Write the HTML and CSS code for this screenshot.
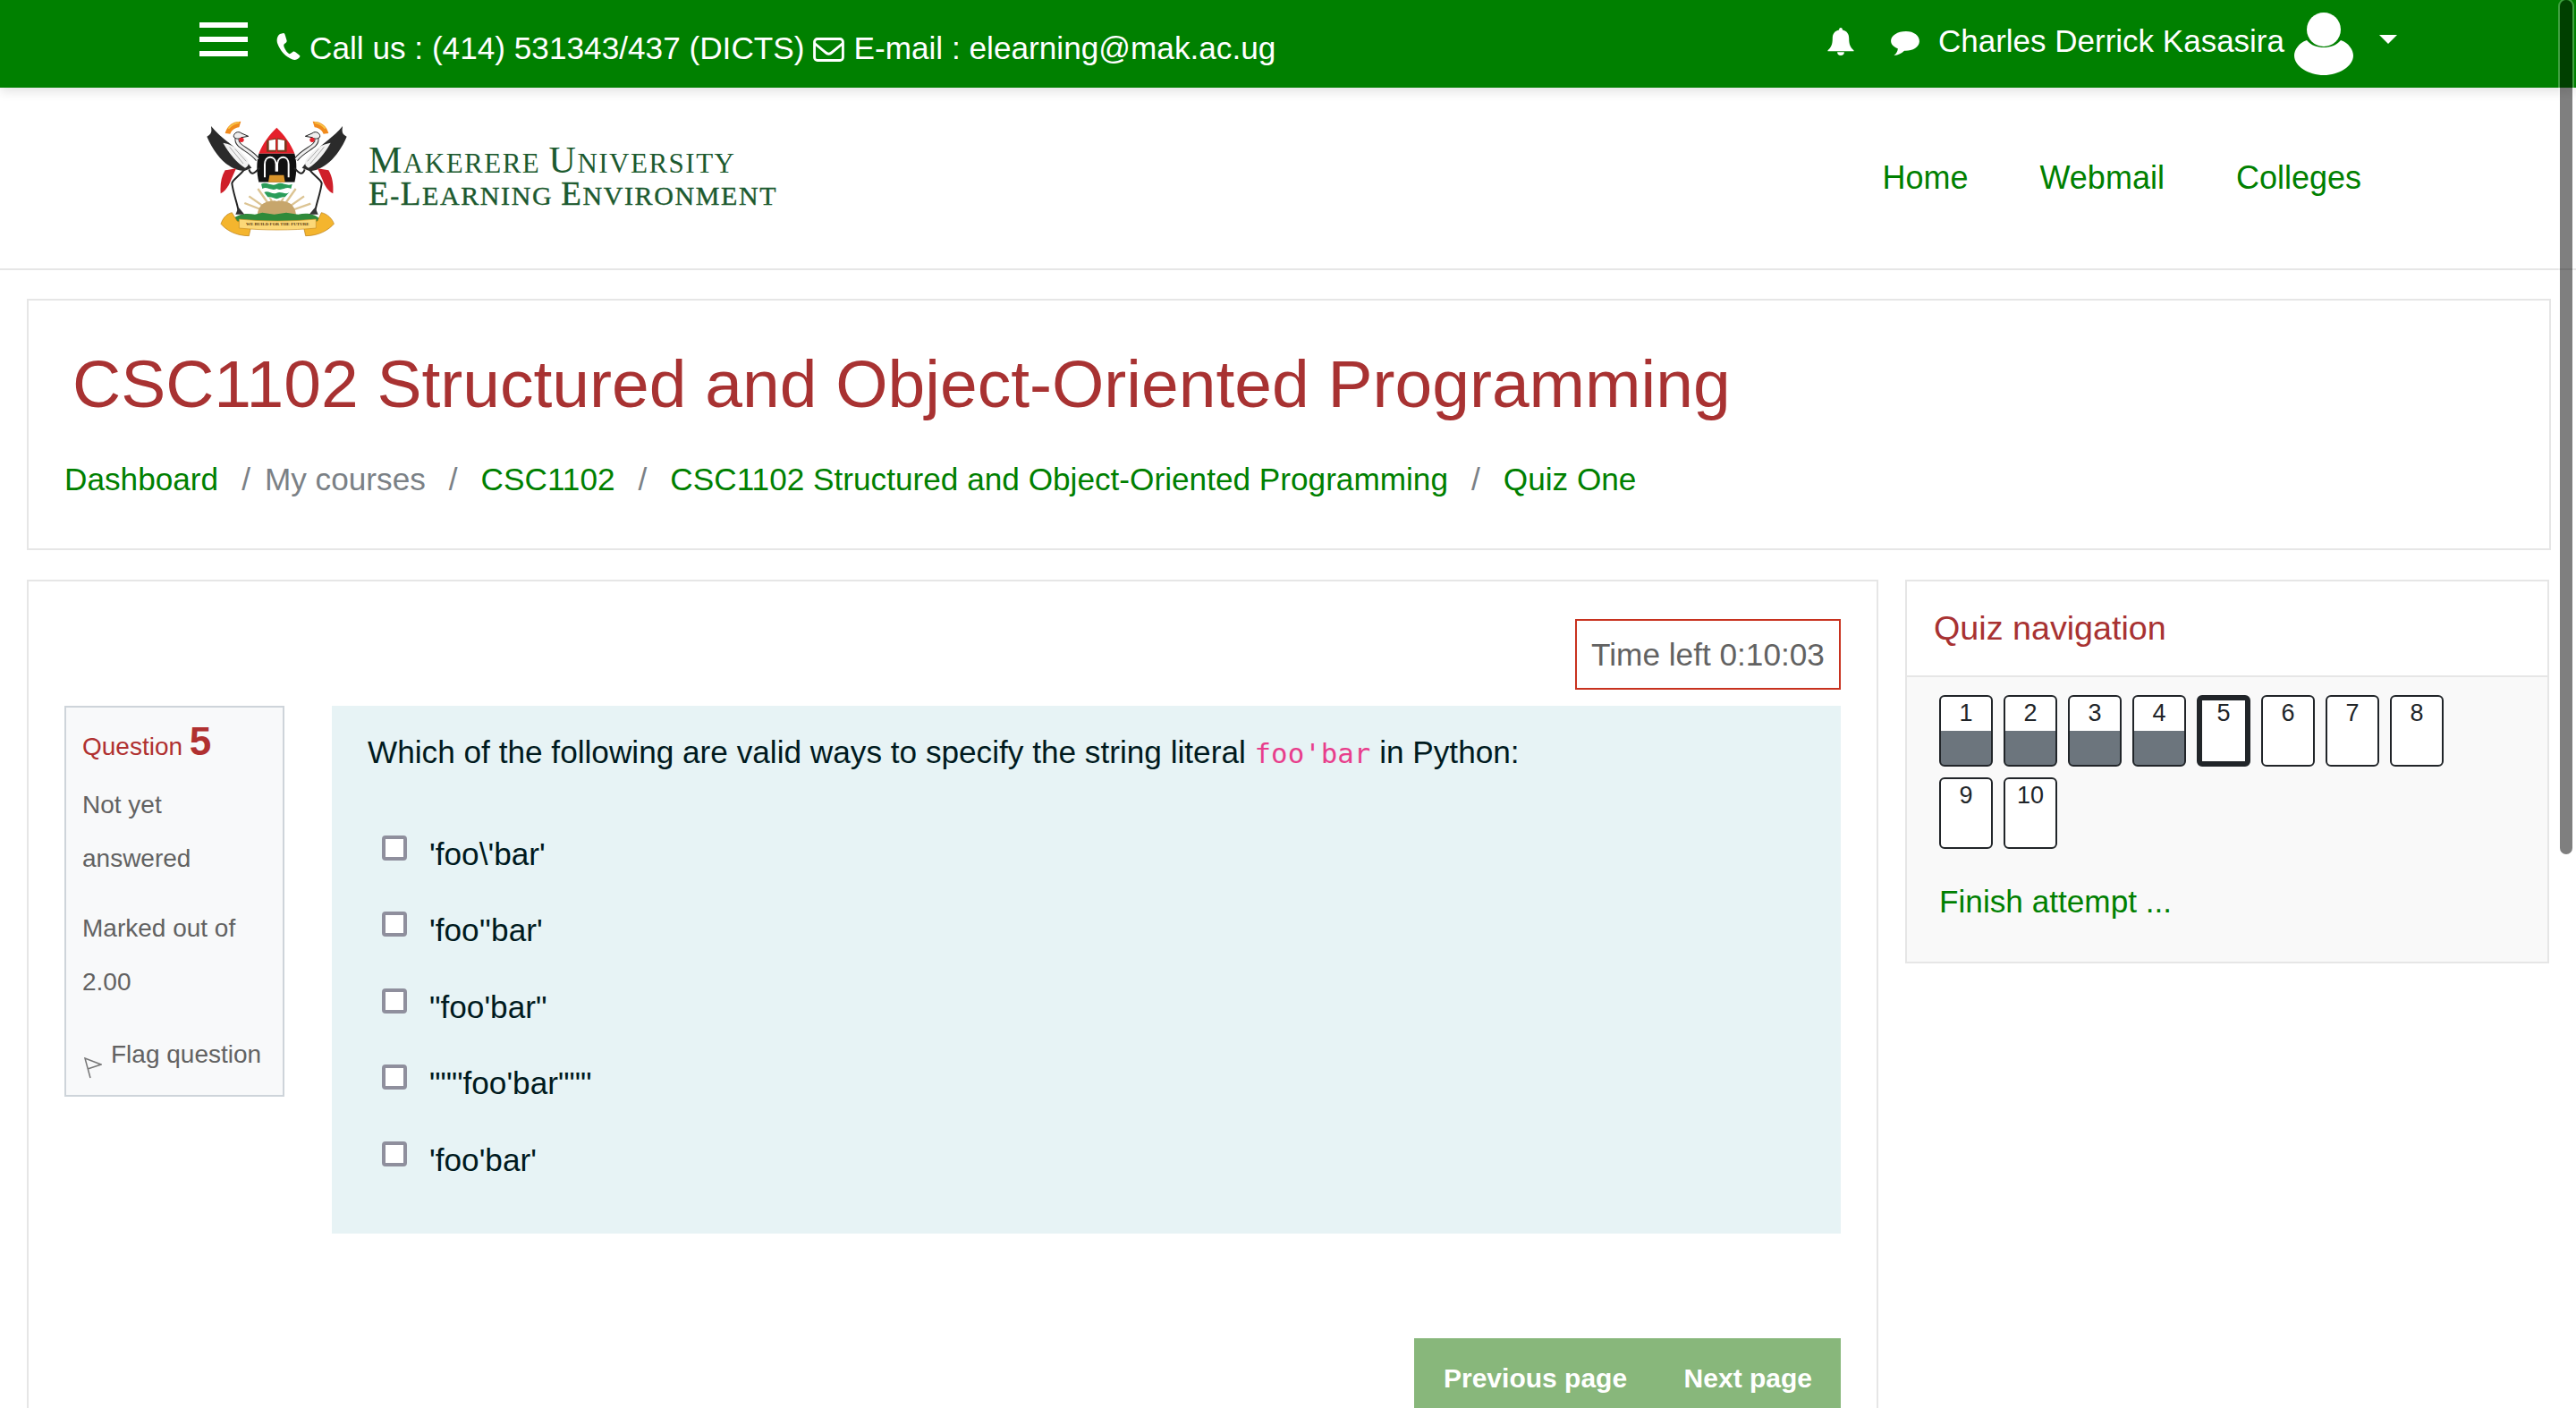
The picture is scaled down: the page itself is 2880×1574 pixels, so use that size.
FILE: index.html
```html
<!DOCTYPE html>
<html>
<head>
    <meta charset="utf-8">
    <title>Quiz One</title>
    <link rel="stylesheet" href="styles.css">
</head>
<body>

<header class="topbar">
    <div class="hamburger"><span></span><span></span><span></span></div>
    <svg class="ico-phone" viewBox="0 0 30 30"><path d="M7 1 L11 0 C12 0 12.500 1 13 3 L14.500 8 C15 10 14 10.500 12 12 C11 13 11 14 12 16.500 C13.500 20 15.500 22 17 23 C18 23.500 19 23 20 22 C21.500 20.500 22.500 20 24 21 L28.500 24.500 C30 25.500 29.500 26.500 28.500 27.500 C26.500 29.500 24 30.500 21 29.500 C14 27 7 20 4 11 C3 7 4 3 7 1 Z" fill="#fff"/></svg>
    <span class="contact">Call us : (414) 531343/437 (DICTS)</span>
    <svg class="ico-mail" viewBox="0 0 36 28"><rect x="1.500" y="1.500" width="33" height="25" rx="3.500" fill="none" stroke="#fff" stroke-width="3"/><path d="M2 7 L14 17 C16.500 19.500 19.500 19.500 22 17 L34 7" fill="none" stroke="#fff" stroke-width="3"/></svg>
    <span class="contact">E-mail : elearning@mak.ac.ug</span>

    <div class="topbar-right">
        <svg class="ico-bell" viewBox="0 0 30 32"><path d="M15 0 C16.500 0 17 1 17 2.500 C22 3.500 24.500 7 24.500 12 C24.500 19 26 22.500 30 26 L30 27 L0 27 L0 26 C4 22.500 5.500 19 5.500 12 C5.500 7 8 3.500 13 2.500 C13 1 13.500 0 15 0 Z M11 28 L19 28 C19 30.500 17.500 32 15 32 C12.500 32 11 30.500 11 28 Z" fill="#fff"/></svg>
        <svg class="ico-chat" viewBox="0 0 34 28"><path d="M18 0 C27 0 34 5 33.500 12 C33 19 25 23 16 22.500 C13 25.500 9 27.500 4 28 C7 25.500 8.500 23 8.500 20 C3 18 0.500 15 0.500 11 C0.500 5 8 0 18 0 Z" fill="#fff"/></svg>
        <span class="username">Charles Derrick Kasasira</span>
        <svg class="ico-user" viewBox="0 0 66 70"><ellipse cx="33" cy="19" rx="19" ry="19" fill="#fff"/><path d="M14 31 C19 37 26 39 33 39 C40 39 47 37 52 31 C61 34 66 42 66 48 C66 60 50 70 33 70 C16 70 0 60 0 48 C0 42 5 34 14 31 Z" fill="#fff"/></svg>
        <span class="caret"></span>
    </div>
</header>

<nav class="navbar">
    <svg class="crest" viewBox="0 0 600 480">
        <!-- sun rays -->
        <g stroke="#dcc493" stroke-width="7">
            <path d="M298 360 L190 318 M298 360 L205 295 M298 360 L235 270 M298 360 L262 260 M298 360 L334 260 M298 360 L362 270 M298 360 L390 295 M298 360 L412 320"/>
        </g>
        <path d="M233 360 C236 320 262 310 298 310 C334 310 360 320 363 360 Z" fill="#c7a66c"/>
        <path d="M140 382 C165 350 200 352 225 356 L250 350 L290 356 L330 350 L370 356 C400 350 430 352 452 382 Z" fill="#2f8a3a"/>
        <!-- shield -->
        <path d="M298 65 C272 90 250 120 238 152 L358 152 C346 120 324 90 298 65 Z" fill="#e5202a"/>
        <path d="M238 152 L358 152 C366 180 366 215 358 248 L238 248 C230 215 230 180 238 152 Z" fill="#111"/>
        <path d="M238 248 L358 248 C352 275 328 300 298 312 C268 300 244 275 238 248 Z" fill="#fff"/>
        <path d="M246 254 C265 244 280 264 298 254 C316 244 332 264 350 254 L346 270 C328 260 316 280 298 270 C280 280 265 260 250 270 Z M256 282 C270 274 284 292 298 284 C312 276 326 292 340 282 L326 298 C316 296 306 302 298 304 C288 300 278 296 268 298 Z" fill="#2a9d5a"/>
        <path d="M264 108 L296 100 L296 146 L264 146 Z M300 100 L332 108 L332 146 L300 146 Z" fill="#7b3a1e"/>
        <path d="M272 108 L294 104 L294 140 L272 140 Z M302 104 L324 108 L324 140 L302 140 Z" fill="#fff"/>
        <path d="M258 232 L258 188 C258 158 292 156 296 186 L296 212 M300 212 L300 186 C304 156 338 158 338 188 L338 232" fill="none" stroke="#fff" stroke-width="6"/>
        <path d="M274 224 L322 224 L326 248 L270 248 Z" fill="#d9952b"/>
        <!-- cranes -->
        <g id="crane">
            <path d="M125 84 C132 58 150 44 178 44 L172 64 C158 66 148 72 142 86 Z" fill="#f08a1d"/>
            <path d="M136 68 C146 56 158 50 172 48" stroke="#f7c948" stroke-width="5" fill="none"/>
            <!-- legs -->
            <path d="M190 205 C170 230 150 240 148 252 C152 285 165 315 170 345 M205 205 C212 225 222 222 240 200" fill="none" stroke="#222" stroke-width="6"/>
            <path d="M160 356 L170 332 L190 356 Z" fill="#333"/>
            <!-- wing -->
            <path d="M64 95 C85 85 78 70 78 60 C105 95 150 122 174 148 L214 200 L190 210 C145 210 95 168 64 95 Z" fill="#2b2b2b"/>
            <path d="M118 116 C145 120 172 134 198 168 C208 182 204 196 192 200 C165 184 138 152 118 116 Z" fill="#f2f2f2"/>
            <path d="M140 130 L186 186 M158 136 L196 178" stroke="#aaa" stroke-width="3"/>
            <path d="M125 208 L162 202 L145 240 C138 260 125 280 110 286 C108 255 112 230 125 208 Z" fill="#cf1f2a"/>
            <!-- neck and head -->
            <path d="M165 100 C160 130 205 135 234 172" fill="none" stroke="#333" stroke-width="15"/>
            <path d="M165 100 C160 130 205 135 234 172" fill="none" stroke="#eee" stroke-width="9"/>
            <path d="M180 84 L203 94 L180 98 C172 104 160 104 154 96 C152 84 168 74 180 84 Z" fill="#eee" stroke="#222" stroke-width="3"/>
            <circle cx="180" cy="106" r="8" fill="#e5202a"/>
        </g>
        <use href="#crane" transform="translate(597 0) scale(-1 1)"/>
        <!-- scroll -->
        <path d="M148 350 C128 354 116 372 111 388 C128 408 160 428 205 428 L212 396 L165 378 Z" fill="#f4b52e" stroke="#b67a12" stroke-width="2"/>
        <path d="M448 350 C468 354 486 372 490 388 C472 408 440 428 395 428 L388 396 L435 378 Z" fill="#f4b52e" stroke="#b67a12" stroke-width="2"/>
        <path d="M172 372 C250 380 350 380 430 372 L430 402 C350 410 250 410 172 402 Z" fill="#fcd877" stroke="#c88e22" stroke-width="2"/>
        <text class="crest-motto" x="301" y="392" text-anchor="middle">WE BUILD FOR THE FUTURE</text>
    </svg>
    <div class="brand">
        <div class="brand-top"><span>M</span>akerere <span>U</span>niversity</div>
        <div class="brand-bottom"><span>E</span>-<span>L</span>earning <span>E</span>nvironment</div>
    </div>
    <ul class="nav-links">
        <li>Home</li>
        <li>Webmail</li>
        <li>Colleges</li>
    </ul>
</nav>

<section class="page-head">
    <h1>CSC1102 Structured and Object-Oriented Programming</h1>
    <ol class="crumbs">
        <li><a>Dashboard</a></li>
        <li class="sep first">/</li>
        <li>My courses</li>
        <li class="sep">/</li>
        <li><a>CSC1102</a></li>
        <li class="sep">/</li>
        <li><a>CSC1102 Structured and Object-Oriented Programming</a></li>
        <li class="sep">/</li>
        <li><a>Quiz One</a></li>
    </ol>
</section>

<div class="columns">
    <main class="quiz-card">
        <div class="time-left">Time left 0:10:03</div>

        <div class="question-row">
            <aside class="q-info">
                <h3 class="q-no">Question <b>5</b></h3>
                <p class="q-state">Not yet answered</p>
                <p class="q-grade">Marked out of 2.00</p>
                <div class="q-flag">
                    <svg viewBox="0 0 20 24"><path d="M7 23 L1 1 L19 8 L4 13" fill="none" stroke="#777" stroke-width="1.500"/></svg>
                    <span>Flag question</span>
                </div>
            </aside>

            <div class="formulation">
                <p class="q-text">Which of the following are valid ways to specify the string literal <code>foo'bar</code> in Python:</p>
                <div class="answers">
                    <label class="answer"><span class="check"></span>'foo\'bar'</label>
                    <label class="answer"><span class="check"></span>'foo''bar'</label>
                    <label class="answer"><span class="check"></span>"foo'bar"</label>
                    <label class="answer"><span class="check"></span>"""foo'bar"""</label>
                    <label class="answer"><span class="check"></span>'foo'bar'</label>
                </div>
            </div>
        </div>

        <div class="page-btns">
            <span>Previous page</span>
            <span>Next page</span>
        </div>
    </main>

    <aside class="quiz-nav">
        <h4>Quiz navigation</h4>
        <div class="quiz-nav-body">
            <div class="q-buttons">
                <span class="q-btn answered">1</span>
                <span class="q-btn answered">2</span>
                <span class="q-btn answered">3</span>
                <span class="q-btn answered">4</span>
                <span class="q-btn current">5</span>
                <span class="q-btn">6</span>
                <span class="q-btn">7</span>
                <span class="q-btn">8</span>
                <span class="q-btn">9</span>
                <span class="q-btn">10</span>
            </div>
            <a class="finish">Finish attempt ...</a>
        </div>
    </aside>
</div>

<div class="scroll-thumb"></div>

</body>
</html>
```

FILE: styles.css
```css
html, body {
    margin: 0;
    height: 1574px;
    overflow: hidden;
    background: #fff;
    font-family: "Liberation Sans", Arial, sans-serif;
    color: #626262;
}

/* top green bar */
.topbar {
    height: 98px;
    background: #008000;
    color: #fff;
    display: flex;
    align-items: flex-start;
    padding-left: 223px;
    box-shadow: 0 4px 12px rgba(0, 0, 0, 0.12);
    position: relative;
}

.hamburger {
    width: 54px;
    margin-top: 25px;
    display: flex;
    flex-direction: column;
    gap: 10px;
}

.hamburger span {
    display: block;
    height: 6px;
    background: #fff;
}

.ico-phone {
    width: 30px;
    height: 30px;
    margin: 37px 10px 0 29px;
}

.contact {
    font-size: 35.200px;
    line-height: 42px;
    margin-top: 33px;
    white-space: nowrap;
}

.ico-mail {
    width: 35px;
    height: 27px;
    margin: 42px 10px 0 10px;
}

.topbar-right {
    margin-left: auto;
    display: flex;
    align-items: flex-start;
    padding-right: 200px;
}

.ico-bell {
    width: 30px;
    height: 31px;
    margin: 31px 40px 0 0;
}

.ico-chat {
    width: 34px;
    height: 27px;
    margin: 35px 20px 0 0;
}

.username {
    font-size: 35px;
    line-height: 42px;
    margin-top: 25px;
    white-space: nowrap;
}

.ico-user {
    width: 66px;
    height: 70px;
    margin: 14px 0 0 11px;
}

.caret {
    width: 0;
    height: 0;
    margin: 39px 0 0 29px;
    border-left: 10px solid transparent;
    border-right: 10px solid transparent;
    border-top: 10px solid #fff;
}

/* logo and links */
.navbar {
    height: 204px;
    box-sizing: border-box;
    border-bottom: 2px solid #e6e6e6;
    display: flex;
    align-items: center;
    padding-left: 210px;
}

.crest {
    width: 200px;
    height: 160px;
    margin-top: 4px;
}

.crest-motto {
    font-family: "Liberation Serif", serif;
    font-size: 15px;
    font-weight: bold;
    fill: #5a3a10;
}

.brand {
    margin: -2px 0 0 2px;
    font-family: "Liberation Serif", serif;
    text-transform: uppercase;
    color: #1c5a2f;
    white-space: nowrap;
}

.brand-top {
    font-size: 31px;
    line-height: 36px;
    letter-spacing: 1.500px;
}

.brand-top span {
    font-size: 42px;
}

.brand-bottom {
    font-size: 30px;
    line-height: 32px;
    letter-spacing: 1.600px;
    -webkit-text-stroke: 0.400px #1c5a2f;
}

.brand-bottom span {
    font-size: 37px;
}

.nav-links {
    list-style: none;
    margin: 0 240px 0 auto;
    padding: 0;
    display: flex;
    gap: 80px;
    font-size: 36px;
    color: #008000;
}

/* course title */
.page-head {
    margin: 32px 28px 0 30px;
    height: 281px;
    box-sizing: border-box;
    border: 2px solid #e6e6e6;
    padding: 43px 40px 0 40px;
}

.page-head h1 {
    margin: 0 0 0 9px;
    font-size: 75px;
    line-height: 100px;
    font-weight: normal;
    color: #a83232;
    white-space: nowrap;
}

.crumbs {
    list-style: none;
    margin: 35px 0 0 0;
    padding: 0;
    display: flex;
    font-size: 35.200px;
    line-height: 44px;
    color: #7b8186;
    white-space: nowrap;
}

.crumbs a {
    color: #008000;
}

.crumbs .sep {
    padding: 0 26px;
}

.crumbs .sep.first {
    padding-right: 16px;
}

/* the two columns below */
.columns {
    display: grid;
    grid-template-columns: 2070px 720px;
    gap: 30px;
    margin: 33px 0 0 30px;
    align-items: start;
}

.quiz-card {
    box-sizing: border-box;
    height: 1100px;
    border: 2px solid #e6e6e6;
    padding: 42px 40px 0 40px;
}

.time-left {
    width: 297px;
    height: 79px;
    box-sizing: border-box;
    margin-left: auto;
    border: 2px solid #c8321f;
    font-size: 35.200px;
    line-height: 75px;
    text-align: center;
    white-space: nowrap;
}

.question-row {
    display: flex;
    align-items: flex-start;
    gap: 53px;
    margin-top: 18px;
}

.q-info {
    width: 246px;
    height: 437px;
    box-sizing: border-box;
    flex: none;
    border: 2px solid #ced4da;
    background: #f8f9fa;
    padding: 0 18px;
    font-size: 28px;
    line-height: 60px;
}

.q-no {
    margin: 8px 0 5px 0;
    font-size: 28px;
    font-weight: normal;
    line-height: 60px;
    color: #b03030;
}

.q-no b {
    font-size: 44px;
}

.q-state, .q-grade {
    margin: 0;
}

.q-grade {
    margin-top: 18px;
}

.q-flag {
    display: flex;
    align-items: flex-start;
    gap: 10px;
    margin-top: 21px;
    white-space: nowrap;
}

.q-flag svg {
    width: 20px;
    height: 24px;
    margin: 33px 0 0 2px;
    flex: none;
}

.formulation {
    flex: 1;
    height: 590px;
    box-sizing: border-box;
    background: #e7f3f5;
    padding: 29px 40px;
    color: #001a1e;
    font-size: 35.200px;
}

.q-text {
    margin: 0;
    line-height: 46px;
}

code {
    font-family: "DejaVu Sans Mono", monospace;
    font-size: 30.800px;
    color: #e83e8c;
}

.answers {
    margin-top: 67px;
}

.answer {
    display: flex;
    align-items: flex-start;
    height: 85.400px;
    line-height: 46px;
    padding-left: 16px;
}

.check {
    width: 28px;
    height: 28px;
    box-sizing: border-box;
    margin: 2px 25px 0 0;
    border: 4px solid #8f8f9d;
    border-radius: 4px;
    background: #fff;
    flex: none;
}

.page-btns {
    width: 477px;
    height: 100px;
    margin: 117px 0 0 auto;
    background: #88b77b;
    color: #fff;
    font-size: 30px;
    font-weight: bold;
    display: flex;
    justify-content: space-between;
    padding: 25px 32px 0 33px;
    box-sizing: border-box;
    line-height: 40px;
}

/* quiz navigation block */
.quiz-nav {
    box-sizing: border-box;
    height: 429px;
    border: 2px solid #e6e6e6;
}

.quiz-nav h4 {
    margin: 0;
    height: 105px;
    padding-left: 30px;
    font-size: 37.700px;
    font-weight: normal;
    line-height: 105px;
    color: #a83232;
}

.quiz-nav-body {
    height: 320px;
    box-sizing: border-box;
    border-top: 2px solid #e6e6e6;
    background: #f9f9f9;
    padding: 20px 90px 0 36px;
}

.q-buttons {
    display: flex;
    flex-wrap: wrap;
    gap: 12px;
}

.q-btn {
    width: 60px;
    height: 80px;
    box-sizing: border-box;
    border: 2px solid #212529;
    border-radius: 6px;
    background: #fff;
    color: #212529;
    font-size: 27px;
    line-height: 36px;
    text-align: center;
}

.q-btn.answered {
    background: linear-gradient(#fff 50%, #6c757d 50%);
}

.q-btn.current {
    border-width: 6px;
    line-height: 28px;
}

.finish {
    display: block;
    margin-top: 37px;
    font-size: 35.200px;
    line-height: 44px;
    color: #008000;
}

/* overlay scrollbar */
.scroll-thumb {
    position: absolute;
    top: 0;
    right: 4px;
    width: 14px;
    height: 955px;
    border-radius: 7px;
    background: rgba(0, 0, 0, 0.5);
    box-shadow: 0 0 0 2px rgba(255, 255, 255, 0.25);
}
```
